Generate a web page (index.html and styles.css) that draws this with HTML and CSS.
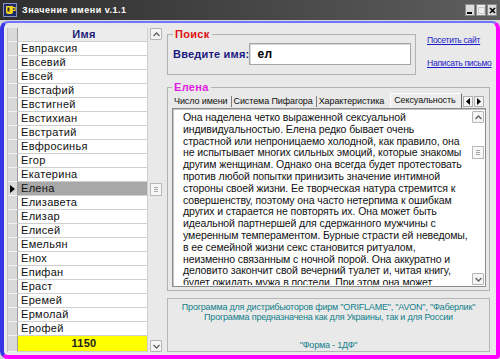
FILE: index.html
```html
<!DOCTYPE html>
<html lang="ru">
<head>
    <meta charset="UTF-8">
    <title>Значение имени v.1.1</title>
    <link rel="stylesheet" href="styles.css">
</head>
<body>
    <div class="window">
        <div class="titlebar">
            <svg class="app-icon" width="14" height="14" viewBox="0 0 14 14">
                <rect x="0.5" y="0.5" width="13" height="13" fill="#1c2a6a" stroke="#8890c0"/>
                <path d="M3 3 H10 V9 Q10 11 8 11 H5 Q3 11 3 9 Z" fill="#f2d21a"/>
                <path d="M10 4.5 H12 V7.5 H10" fill="none" stroke="#f2d21a" stroke-width="1.2"/>
                <rect x="4.5" y="4.5" width="2" height="4" fill="#2a2a2a"/>
            </svg>
            <span class="title">Значение имени v.1.1</span>
            <div class="caption-btns">
                <span class="cbtn"><svg width="6" height="8"><rect x="0" y="6" width="5" height="2" fill="#000"/></svg></span>
                <span class="cbtn faint"><svg width="7" height="7"><rect x="0.5" y="0.5" width="6" height="6" fill="none" stroke="#c8c8c8"/></svg></span>
                <span class="cbtn"><svg width="7" height="7"><path d="M1 1 L6 6 M6 1 L1 6" stroke="#000" stroke-width="1.6"/></svg></span>
            </div>
        </div>

        <div class="frame">
            <div class="names">
                <div class="grid">
                    <div class="row head"><span class="ind"></span><span class="cell">Имя</span></div>
                    <div class="row"><span class="ind"></span><span class="cell">Евпраксия</span></div>
                    <div class="row"><span class="ind"></span><span class="cell">Евсевий</span></div>
                    <div class="row"><span class="ind"></span><span class="cell">Евсей</span></div>
                    <div class="row"><span class="ind"></span><span class="cell">Евстафий</span></div>
                    <div class="row"><span class="ind"></span><span class="cell">Евстигней</span></div>
                    <div class="row"><span class="ind"></span><span class="cell">Евстихиан</span></div>
                    <div class="row"><span class="ind"></span><span class="cell">Евстратий</span></div>
                    <div class="row"><span class="ind"></span><span class="cell">Евфросинья</span></div>
                    <div class="row"><span class="ind"></span><span class="cell">Егор</span></div>
                    <div class="row"><span class="ind"></span><span class="cell">Екатерина</span></div>
                    <div class="row selected">
                        <span class="ind"><svg width="5" height="8"><path d="M0 0 L5 4 L0 8 Z" fill="#000"/></svg></span>
                        <span class="cell">Елена</span>
                    </div>
                    <div class="row"><span class="ind"></span><span class="cell">Елизавета</span></div>
                    <div class="row"><span class="ind"></span><span class="cell">Елизар</span></div>
                    <div class="row"><span class="ind"></span><span class="cell">Елисей</span></div>
                    <div class="row"><span class="ind"></span><span class="cell">Емельян</span></div>
                    <div class="row"><span class="ind"></span><span class="cell">Енох</span></div>
                    <div class="row"><span class="ind"></span><span class="cell">Епифан</span></div>
                    <div class="row"><span class="ind"></span><span class="cell">Ераст</span></div>
                    <div class="row"><span class="ind"></span><span class="cell">Еремей</span></div>
                    <div class="row"><span class="ind"></span><span class="cell">Ермолай</span></div>
                    <div class="row"><span class="ind"></span><span class="cell">Ерофей</span></div>
                    <div class="row total"><span class="ind"></span><span class="cell">1150</span></div>
                </div>
                <div class="vscroll">
                    <span class="sbtn"><svg width="7" height="5"><path d="M0.5 4 L3.5 1 L6.5 4" fill="none" stroke="#606060" stroke-width="1.3"/></svg></span>
                    <div class="track"><span class="thumb names-thumb"><i></i><i></i><i></i></span></div>
                    <span class="sbtn"><svg width="7" height="5"><path d="M0.5 1 L3.5 4 L6.5 1" fill="none" stroke="#606060" stroke-width="1.3"/></svg></span>
                </div>
            </div>

            <div class="main">
                <div class="search-row">
                    <fieldset class="group search">
                        <legend class="legend-red">Поиск</legend>
                        <div class="search-body">
                            <label for="name">Введите имя:</label>
                            <input id="name" type="text" value="ел">
                        </div>
                    </fieldset>
                    <div class="links">
                        <a href="#">Посетить сайт</a>
                        <a href="#">Написать письмо</a>
                    </div>
                </div>

                <fieldset class="group info">
                    <legend class="legend-pink">Елена</legend>
                    <div class="tabs">
                        <span class="tab">Число имени</span>
                        <span class="tab">Система Пифагора</span>
                        <span class="tab plain">Характеристика</span>
                        <span class="tab active">Сексуальность</span>
                        <div class="tab-arrows">
                            <span class="tbtn"><svg width="4" height="7"><path d="M4 0 L0 3.5 L4 7 Z" fill="#000"/></svg></span>
                            <span class="tbtn"><svg width="4" height="7"><path d="M0 0 L4 3.5 L0 7 Z" fill="#000"/></svg></span>
                        </div>
                    </div>
                    <div class="memo">
                        <div class="memo-text">Она наделена четко выраженной сексуальной<br>индивидуальностью. Елена редко бывает очень<br>страстной или непроницаемо холодной, как правило, она<br>не испытывает многих сильных эмоций, которые знакомы<br>другим женщинам. Однако она всегда будет протестовать<br>против любой попытки принизить значение интимной<br>стороны своей жизни. Ее творческая натура стремится к<br>совершенству, поэтому она часто нетерпима к ошибкам<br>других и старается не повторять их. Она может быть<br>идеальной партнершей для сдержанного мужчины с<br>умеренным темпераментом. Бурные страсти ей неведомы,<br>в ее семейной жизни секс становится ритуалом,<br>неизменно связанным с ночной порой. Она аккуратно и<br>деловито закончит свой вечерний туалет и, читая книгу,<br>будет ожидать мужа в постели. При этом она может<br>быть очень нежной и внимательной.</div>
                        <div class="vscroll">
                            <span class="sbtn"><svg width="7" height="5"><path d="M0.5 4 L3.5 1 L6.5 4" fill="none" stroke="#606060" stroke-width="1.3"/></svg></span>
                            <div class="track"><span class="thumb memo-thumb"><i></i><i></i><i></i></span></div>
                            <span class="sbtn"><svg width="7" height="5"><path d="M0.5 1 L3.5 4 L6.5 1" fill="none" stroke="#606060" stroke-width="1.3"/></svg></span>
                        </div>
                    </div>
                </fieldset>

                <div class="about">
                    <span>Программа для дистрибьюторов фирм "ORIFLAME", "AVON", "Фаберлик"</span>
                    <span>Программа предназначена как для Украины, так и для России</span>
                    <span class="form-name">"Форма - 1ДФ"</span>
                </div>
            </div>
        </div>
    </div>
</body>
</html>
```

FILE: styles.css
```css
* {
    box-sizing: border-box;
}

body {
    margin: 0;
    font-family: "Liberation Sans", Arial, sans-serif;
    background-color: #d6d6d6;
}

.window {
    width: 500px;
    height: 359px;
    display: flex;
    flex-direction: column;
    overflow: hidden;
}

/* title bar */
.titlebar {
    height: 20px;
    flex: none;
    display: flex;
    align-items: center;
    padding: 0 3px 0 3px;
    background: linear-gradient(to right, #2e2e2e, #4a4a4a 60%, #5e5e5e);
    color: #fff;
}

.app-icon {
    margin-right: 5px;
}

.title {
    font-size: 9px;
    font-weight: bold;
    letter-spacing: 0.5px;
}

.caption-btns {
    margin-left: auto;
    display: flex;
    gap: 1px;
}

.cbtn {
    width: 10px;
    height: 12px;
    display: flex;
    align-items: center;
    justify-content: center;
    background-color: #dcdcdc;
    border: 1px solid #8c8c8c;
}

.cbtn.faint {
    background-color: #ededed;
}

/* window body */
.frame {
    flex: 1;
    margin-top: 1px;
    display: flex;
    gap: 5px;
    background-color: #e9e9e9;
    border-style: solid;
    border-width: 2px 4px 4px 4px;
    border-color: #7272ff #ff00ff #ff00ff #3535e6;
    border-radius: 8px 8px 4px 8px;
    padding: 5px 6px 3px 3px;
}

/* names grid */
.names {
    width: 155px;
    flex: none;
    display: flex;
    gap: 2px;
}

.grid {
    width: 141px;
    display: flex;
    flex-direction: column;
    background-color: #fff;
    border-left: 1px solid #c4c4c4;
}

.row {
    display: flex;
    height: 14px;
    flex: none;
}

.ind {
    width: 10px;
    flex: none;
    display: flex;
    align-items: center;
    justify-content: center;
    background-color: #d9d9d9;
    border-right: 1px solid #9c9c9c;
    border-bottom: 1px solid #f2f2f2;
}

.cell {
    flex: 1;
    padding-left: 3px;
    font-size: 11px;
    line-height: 13px;
    letter-spacing: 0.3px;
    color: #111;
    border-bottom: 1px solid #cfcfcf;
    border-right: 1px solid #cfcfcf;
}

.row.head .cell {
    text-align: center;
    font-weight: bold;
    color: #1e1e78;
    background-color: #ececec;
}

.row.selected .cell {
    background-color: #a8a8a8;
}

.row.total {
    flex: 1;
}

.row.total .cell {
    background-color: #ffff00;
    text-align: center;
    font-weight: bold;
    line-height: 15px;
    color: #222;
}

/* scrollbars */
.vscroll {
    width: 12px;
    flex: none;
    display: flex;
    flex-direction: column;
}

.sbtn {
    height: 12px;
    flex: none;
    display: flex;
    align-items: center;
    justify-content: center;
    background-color: #f5f5f5;
    border: 1px solid #b4b4b4;
    border-radius: 1px;
}

.track {
    flex: 1;
}

.thumb {
    height: 13px;
    display: flex;
    flex-direction: column;
    justify-content: center;
    gap: 1px;
    padding: 0 3px;
    background-color: #f7f7f7;
    border: 1px solid #b8b8b8;
}

.thumb i {
    height: 1px;
    background-color: #a8a8a8;
}

.names-thumb {
    margin-top: 143px;
}

.memo-thumb {
    margin-top: 23px;
}

/* right side */
.main {
    flex: 1;
    min-width: 0;
    display: flex;
    flex-direction: column;
}

.search-row {
    display: flex;
    height: 47px;
    flex: none;
}

.group {
    margin: 0;
    min-width: 0;
    border: 1px solid #b2b2b2;
    padding: 0 4px 0 5px;
}

.group legend {
    padding: 0 2px;
    font-size: 11px;
    font-weight: bold;
    line-height: 13px;
    letter-spacing: 0.3px;
}

.legend-red {
    color: #e01010;
}

.legend-pink {
    color: #e020e0;
}

.search {
    width: 249px;
    height: 47px;
    flex: none;
}

.search-body {
    display: flex;
    align-items: center;
    margin-top: 2px;
}

.search-body label {
    flex: none;
    white-space: nowrap;
    font-size: 11px;
    font-weight: bold;
    letter-spacing: 0.2px;
    color: #1a1a80;
}

.search-body input {
    margin-left: auto;
    width: 163px;
    min-width: 0;
    height: 22px;
    padding: 0 7px;
    border: 1px solid #a6a6a6;
    box-shadow: inset 1px 1px 0 #d8d8d8;
    font-family: "Liberation Sans", Arial, sans-serif;
    font-size: 12px;
    font-weight: bold;
    letter-spacing: 0.5px;
    color: #000;
    background-color: #fff;
}

.links {
    margin-left: 11px;
    padding-top: 6px;
    display: flex;
    flex-direction: column;
    gap: 11px;
    white-space: nowrap;
}

.links a {
    font-size: 8.6px;
    line-height: 12px;
    color: #1c1cc8;
    text-decoration: underline;
    letter-spacing: -0.3px;
}

.info {
    height: 210px;
    flex: none;
    margin-top: 6px;
    padding: 0 3px 3px 4px;
}

.tabs {
    display: flex;
    align-items: center;
    height: 14px;
    font-size: 9px;
    color: #111;
    white-space: nowrap;
}

.tab {
    padding: 0 3px 0 2px;
    line-height: 11px;
    border-right: 1px solid #7c7c7c;
    letter-spacing: -0.1px;
}

.tab.plain {
    border-right: none;
}

.tab.active {
    margin-left: 3px;
    align-self: flex-end;
    height: 15px;
    line-height: 13px;
    padding: 0 5px 0 3px;
    background-color: #ededed;
    border-top: 1px solid #fff;
    border-left: 1px solid #fff;
    border-right: 1px solid #6c6c6c;
}

.tab-arrows {
    margin-left: auto;
    margin-right: 2px;
    display: flex;
    gap: 1px;
}

.tbtn {
    width: 10px;
    height: 11px;
    display: flex;
    align-items: center;
    justify-content: center;
    background-color: #f2f2f2;
    border: 1px solid #b0b0b0;
}

.memo {
    height: 179px;
    display: flex;
    background-color: #fff;
    border: 1px solid #8c8c8c;
    box-shadow: inset 1px 1px 0 #c4c4c4;
    padding: 2px 1px 1px 0;
}

.memo-text {
    flex: 1;
    min-width: 0;
    padding: 1px 4px 0 10px;
    font-size: 10.5px;
    line-height: 11.8px;
    letter-spacing: -0.1px;
    white-space: nowrap;
    overflow: hidden;
    color: #111;
}

.about {
    height: 54px;
    flex: none;
    margin-top: 7px;
    display: flex;
    flex-direction: column;
    align-items: center;
    padding: 3px 0 1px;
    border: 1px solid #b6b6b6;
    font-size: 9px;
    line-height: 10px;
    letter-spacing: -0.2px;
    color: #12808a;
}

.about .form-name {
    margin-top: auto;
}
```
